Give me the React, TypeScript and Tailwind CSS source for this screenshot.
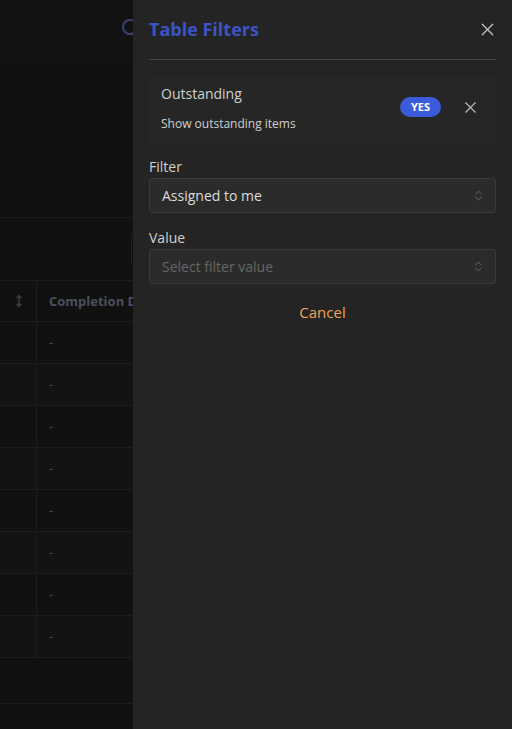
import { X, ChevronsUpDown } from "lucide-react"

const rows = [0, 1, 2, 3, 4, 5, 6, 7]

function BackgroundPage() {
  return (
    <div className="w-[133px] shrink-0 overflow-hidden bg-[#111111]">
      <div className="w-[512px]">
        <div className="h-[61px] bg-[#121212] flex items-center pl-[122px] border-b border-[#151515]">
          <div className="w-[16px] h-[16px] mt-[-6px] rounded-full border-2 border-[#3a4272]" />
        </div>
        <div className="h-[157px] border-b border-[#1d1d1d]" />
        <div className="h-[63px] border-b border-[#1d1d1d] flex items-center pl-[131px]">
          <div className="w-[60px] h-[36px] border border-[#1f1f1f] rounded-sm" />
        </div>
        <div className="h-[41px] flex border-b border-[#1d1d1d]">
          <div className="w-[37px] border-r border-[#1d1d1d] flex items-center justify-end pr-[12px] text-[#3a3d42]">
            <svg width="10" height="14" viewBox="0 0 10 14" fill="none" stroke="currentColor" strokeWidth="1.5">
              <path d="M5 1.5v11M2.5 4 5 1.5 7.5 4M2.5 10 5 12.5 7.5 10" />
            </svg>
          </div>
          <div className="pl-[12px] pt-[1px] flex items-center text-[13px] font-bold text-[#4a505c] whitespace-nowrap">
            Completion Date
          </div>
        </div>
        {rows.map((r) => (
          <div
            key={r}
            className={`h-[42px] flex border-b border-[#1d1d1d] ${r % 2 === 1 ? "bg-[#131313]" : "bg-[#111111]"}`}
          >
            <div className="w-[37px] border-r border-[#1d1d1d]" />
            <div className="pl-[12px] flex items-center text-[13px] text-[#4a4a4a]">-</div>
          </div>
        ))}
        <div className="h-[46px] border-b border-[#1d1d1d]" />
        <div className="h-[26px]" />
      </div>
    </div>
  )
}

function SelectBox({ text, placeholder }: { text: string; placeholder?: boolean }) {
  return (
    <div className="h-[35px] mt-[1px] bg-[#2b2b2b] border border-[#3a3a3a] rounded-[3px] flex items-center justify-between pl-[12px] pr-[10px]">
      <span className={`text-[14px] ${placeholder ? "text-[#666666]" : "text-[#dddddd]"}`}>{text}</span>
      <ChevronsUpDown size={13} strokeWidth={1.5} className="text-[#777777]" />
    </div>
  )
}

function FilterPanel() {
  return (
    <div className="flex-1 bg-[#242424] px-[16px]">
      <div className="h-[60px] flex items-center justify-between border-b border-[#454545] pb-[1px]">
        <h2 className="text-[18px] font-bold text-[#3b55c9]">Table Filters</h2>
        <X size={21} strokeWidth={1.4} className="text-[#c8c8c8] mr-[-2px]" />
      </div>

      <div className="mt-[16px] h-[67px] bg-[#262626] flex items-start justify-between pl-[12px] pr-[16px] pt-[8px]">
        <div className="flex flex-col">
          <span className="text-[14px] text-[#d0d0d0] leading-[20px]">Outstanding</span>
          <span className="text-[12px] text-[#d0d0d0] leading-[16px] mt-[12px]">Show outstanding items</span>
        </div>
        <div className="flex items-center gap-[20px] mt-[13px]">
          <span className="h-[20px] w-[41px] rounded-full bg-[#3b5bdb] text-white text-[11px] font-bold flex items-center justify-center">
            YES
          </span>
          <X size={19} strokeWidth={1.4} className="text-[#bdbdbd]" />
        </div>
      </div>

      <div className="mt-[14px]">
        <div className="text-[14px] text-[#d0d0d0] leading-[20px]">Filter</div>
        <SelectBox text="Assigned to me" />
      </div>

      <div className="mt-[15px]">
        <div className="text-[14px] text-[#d0d0d0] leading-[20px]">Value</div>
        <SelectBox text="Select filter value" placeholder />
      </div>

      <div className="mt-[18px] flex justify-center">
        <button className="text-[15px] text-[#eea45a] leading-[20px]">Cancel</button>
      </div>
    </div>
  )
}

export default function App() {
  return (
    <div
      className="flex h-[729px] w-[512px] overflow-hidden"
      style={{ fontFamily: '"Segoe UI", "Open Sans", "Noto Sans", sans-serif' }}
    >
      <BackgroundPage />
      <FilterPanel />
    </div>
  )
}
